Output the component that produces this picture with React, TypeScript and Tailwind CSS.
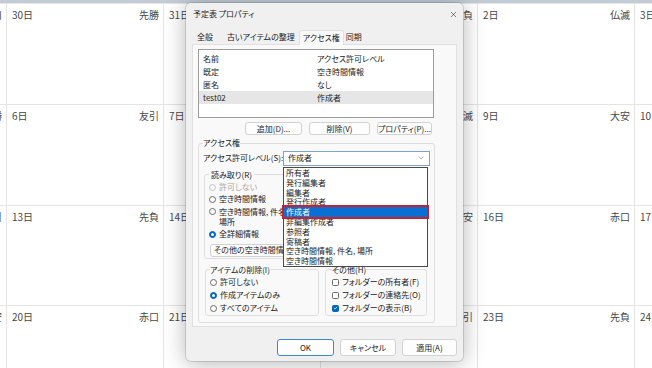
import { X, ChevronDown } from "lucide-react";

const weeks = [
  { h: "h-[101px]", days: [["29日", "赤口"], ["30日", "先勝"], ["31日", "友引"], ["1日", "先負"], ["2日", "仏滅"], ["3日", "大安"]] },
  { h: "h-[101px]", days: [["5日", "先勝"], ["6日", "友引"], ["7日", "先負"], ["8日", "仏滅"], ["9日", "大安"], ["10日", "赤口"]] },
  { h: "h-[100px]", days: [["12日", "友引"], ["13日", "先負"], ["14日", "仏滅"], ["15日", "大安"], ["16日", "赤口"], ["17日", "先勝"]] },
  { h: "h-[100px]", days: [["19日", "大安"], ["20日", "赤口"], ["21日", "先勝"], ["22日", "友引"], ["23日", "先負"], ["24日", "仏滅"]] },
];

const members = [
  ["既定", "空き時間情報"],
  ["匿名", "なし"],
  ["test02", "作成者"],
];

const levels = [
  "所有者",
  "発行編集者",
  "編集者",
  "発行作成者",
  "作成者",
  "非編集作成者",
  "参照者",
  "寄稿者",
  "空き時間情報, 件名, 場所",
  "空き時間情報",
];

function Radio({
  checked = false,
  disabled = false,
  children,
}: {
  checked?: boolean;
  disabled?: boolean;
  children: React.ReactNode;
}) {
  return (
    <div className="flex h-[13px] items-center gap-[3px] whitespace-nowrap">
      <span
        className={`flex h-[7px] w-[7px] shrink-0 items-center justify-center rounded-full border ${
          checked
            ? "border-[#0067c0] bg-[#0067c0]"
            : disabled
              ? "border-[#c6c6c6] bg-[#f6f6f6]"
              : "border-[#6a6a6a] bg-white"
        }`}
      >
        {checked && <span className="h-[3px] w-[3px] rounded-full bg-white" />}
      </span>
      <span className={disabled ? "text-[#a6a6a6]" : ""}>{children}</span>
    </div>
  );
}

function Check({ checked = false, children }: { checked?: boolean; children: React.ReactNode }) {
  return (
    <div className="flex h-[13px] items-center gap-[3px] whitespace-nowrap">
      <span
        className={`flex h-[7px] w-[7px] shrink-0 items-center justify-center rounded-[1.5px] border ${
          checked ? "border-[#0067c0] bg-[#0067c0]" : "border-[#6a6a6a] bg-white"
        }`}
      >
        {checked && (
          <svg viewBox="0 0 8 8" className="h-[6px] w-[6px]">
            <path d="M1.5 4.2 3.2 5.8 6.5 2.2" fill="none" stroke="white" strokeWidth="1.2" />
          </svg>
        )}
      </span>
      <span>{children}</span>
    </div>
  );
}

function Btn({ w, children }: { w: string; children: React.ReactNode }) {
  return (
    <div className={`${w} flex h-[13px] items-center justify-center whitespace-nowrap rounded-[3px] border border-[#d2d2d2] bg-[#fdfdfd]`}>
      {children}
    </div>
  );
}

export default function App() {
  return (
    <div className="relative h-[368px] w-[652px] overflow-hidden bg-white font-['Noto_Sans_CJK_JP',sans-serif]">
      {/* calendar behind the dialog */}
      <div className="h-[3px] bg-[#c3ccd6]" />
      <div className="ml-[-151px] grid grid-cols-[repeat(6,157px)]">
        {weeks.map((week) =>
          week.days.map(([day, rokuyo]) => (
            <div
              key={day}
              className={`${week.h} flex justify-between border-l border-t border-[#e4e4e4] pl-[5px] pr-[4px] pt-[4px] text-[10px] leading-[14px] text-[#474747]`}
            >
              <span>{day}</span>
              <span>{rokuyo}</span>
            </div>
          )),
        )}
      </div>

      {/* properties dialog */}
      <div className="absolute left-[186px] top-[3px] flex h-[358px] w-[277px] flex-col rounded-[5px] bg-[#f0f0f0] text-[8px] leading-[12px] text-[#1b1b1b] shadow-[0_0_0_1px_rgba(0,0,0,0.12),0_2px_22px_rgba(0,0,0,0.3)] [font-feature-settings:'palt']">
        <div className="flex h-[22px] items-center justify-between pl-[7px] pr-[5px]">
          <span>予定表 プロパティ</span>
          <X size={9} strokeWidth={1.4} />
        </div>

        {/* tabs */}
        <div className="flex h-[19px] items-end whitespace-nowrap">
          <span className="ml-[7px] h-[14px] px-[4px] leading-[14px]">全般</span>
          <span className="ml-[6px] h-[14px] px-[4px] leading-[14px]">古いアイテムの整理</span>
          <span className="relative z-10 -mb-px h-[15px] rounded-t-[3px] border border-b-0 border-[#e0e0e0] bg-[#f9f9f9] px-[3px] leading-[14px]">
            アクセス権
          </span>
          <span className="h-[14px] px-[2px] leading-[14px]">同期</span>
        </div>

        <div className="mx-[6px] flex h-[283px] flex-col border border-[#e0e0e0] bg-[#f9f9f9]">
          {/* member list */}
          <div className="ml-[5px] mt-[4px] h-[69px] w-[236px] border border-[#9c9c9c] bg-white pt-[2px]">
            <div className="flex h-[13px] items-center pl-[4px]">
              <span className="w-[114px]">名前</span>
              <span>アクセス許可レベル</span>
            </div>
            {members.map(([name, level]) => (
              <div
                key={name}
                className={`flex h-[13px] items-center pl-[4px] ${name === "test02" ? "bg-[#e6e6e6]" : ""}`}
              >
                <span className="w-[114px]">{name}</span>
                <span>{level}</span>
              </div>
            ))}
          </div>

          <div className="ml-[5px] mt-[4px] flex w-[236px] justify-end gap-[7px] pr-[2px]">
            <Btn w="w-[57px]">追加(D)...</Btn>
            <Btn w="w-[61px]">削除(V)</Btn>
            <Btn w="w-[55px]">プロパティ(P)...</Btn>
          </div>

          {/* permissions group */}
          <fieldset className="ml-[5px] mt-[2px] w-[236px] rounded-[3px] border border-[#dedede] px-[4px] pb-[6px]">
            <legend className="leading-[12px]">アクセス権</legend>
            <div className="mt-[1.5px] flex h-[15px] items-center">
              <span className="w-[80px] shrink-0 whitespace-nowrap">アクセス許可レベル(S):</span>
              <div className="flex h-[15px] w-[147px] items-center justify-between border border-[#7ea3cf] bg-white pl-[4px] pr-[4px]">
                <span>作成者</span>
                <ChevronDown size={8} strokeWidth={1.4} className="text-[#606060]" />
              </div>
            </div>

            <div className="mt-[3px] flex gap-[5px]">
              <fieldset className="ml-[1px] h-[90px] w-[116px] rounded-[3px] border border-[#dedede] pl-[4px]">
                <legend className="px-[2px] leading-[12px]">読み取り(R)</legend>
                <div className="h-[12px]">
                  <Radio disabled>許可しない</Radio>
                </div>
                <div className="h-[12px]">
                  <Radio>空き時間情報</Radio>
                </div>
                <div className="flex h-[23px] items-start gap-[3px] whitespace-nowrap pt-[2px] leading-[10px]">
                  <span className="mt-[1.5px] h-[7px] w-[7px] shrink-0 rounded-full border border-[#6a6a6a] bg-white" />
                  <span>
                    空き時間情報, 件名,
                    <br />
                    場所
                  </span>
                </div>
                <div className="h-[12px]">
                  <Radio checked>全詳細情報</Radio>
                </div>
                <div className="ml-[1px] mt-[4px] flex h-[13px] w-[104px] items-center whitespace-nowrap rounded-[3px] border border-[#d2d2d2] bg-[#fdfdfd] pl-[3px]">
                  その他の空き時間情報...
                </div>
              </fieldset>
              <fieldset className="h-[90px] w-[102px] rounded-[3px] border border-[#dedede] pl-[6px]">
                <legend className="leading-[12px]">書き込み(W)</legend>
                <Check>アイテムの作成</Check>
                <Check>サブフォルダーの作成</Check>
                <Check checked>自分のアイテムの編集</Check>
                <Check>すべてのアイテムの編集</Check>
              </fieldset>
            </div>

            <div className="mt-[5px] flex gap-[6px]">
              <fieldset className="ml-[2px] h-[52px] w-[114px] rounded-[3px] border border-[#dedede] pl-[4px]">
                <legend className="leading-[12px]">アイテムの削除(I)</legend>
                <Radio>許可しない</Radio>
                <Radio checked>作成アイテムのみ</Radio>
                <Radio>すべてのアイテム</Radio>
              </fieldset>
              <fieldset className="h-[52px] w-[102px] rounded-[3px] border border-[#dedede] pl-[6px]">
                <legend className="leading-[12px]">その他(H)</legend>
                <Check>フォルダーの所有者(F)</Check>
                <Check>フォルダーの連絡先(O)</Check>
                <Check checked>フォルダーの表示(B)</Check>
              </fieldset>
            </div>
          </fieldset>
        </div>

        <div className="mt-[12px] flex justify-end gap-[6px] pr-[6px]">
          <div className="flex h-[17px] w-[57px] items-center justify-center rounded-[3px] border-[1.5px] border-[#3f86d4] bg-[#fdfdfd]">
            OK
          </div>
          <div className="flex h-[17px] w-[56px] items-center justify-center rounded-[3px] border border-[#d2d2d2] bg-[#fdfdfd]">
            キャンセル
          </div>
          <div className="flex h-[17px] w-[55px] items-center justify-center rounded-[3px] border border-[#d2d2d2] bg-[#fdfdfd]">
            適用(A)
          </div>
        </div>

        {/* open permission-level list */}
        <div className="absolute left-[97px] top-[164px] z-20 w-[145px] border border-[#4a4a4a] bg-white">
          {levels.map((lv) => (
            <div
              key={lv}
              className={`h-[9.8px] whitespace-nowrap pl-[2px] leading-[9.8px] ${
                lv === "作成者" ? "bg-[#0a6fd2] text-white outline-2 outline-[#c8202f]" : ""
              }`}
            >
              {lv}
            </div>
          ))}
        </div>
      </div>
    </div>
  );
}
